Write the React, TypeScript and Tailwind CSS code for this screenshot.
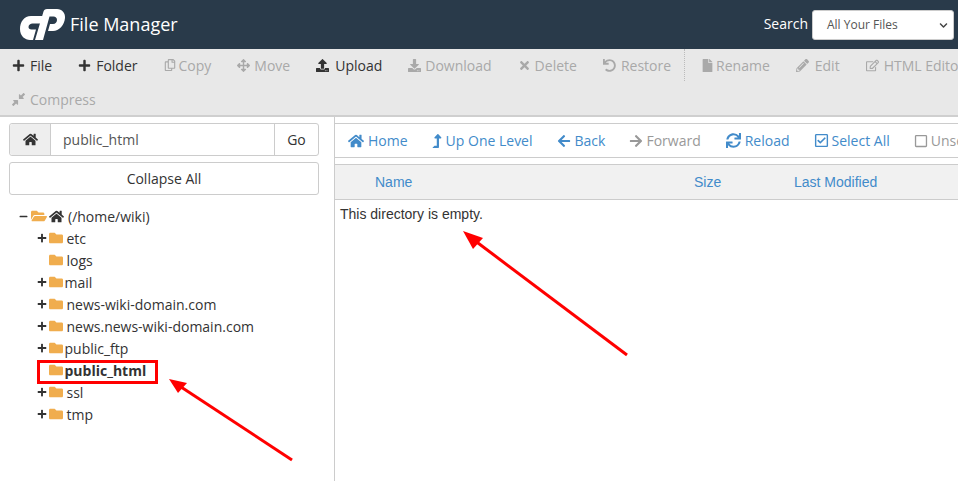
import React from "react";
import {
  FaArrowLeft,
  FaArrowRight,
  FaArrowsAlt,
  FaChevronDown,
  FaDownload,
  FaFile,
  FaFolder,
  FaFolderOpen,
  FaHome,
  FaLevelUpAlt,
  FaMinus,
  FaPencilAlt,
  FaPlus,
  FaRegCheckSquare,
  FaRegCopy,
  FaRegEdit,
  FaRegSquare,
  FaSync,
  FaTimes,
  FaUndo,
  FaUpload,
} from "react-icons/fa";
import { FaDownLeftAndUpRightToCenter } from "react-icons/fa6";

type IconType = React.ComponentType<{ size?: number; className?: string }>;

interface IButton {
  label: string;
  icon: IconType;
  slot: string;
  iconSize?: number;
  off?: boolean;
}

const toolbar: IButton[] = [
  { label: "File", icon: FaPlus, slot: "w-[13px]" },
  { label: "Folder", icon: FaPlus, slot: "w-[13px]" },
  { label: "Copy", icon: FaRegCopy, slot: "w-[10px]", iconSize: 12, off: true },
  { label: "Move", icon: FaArrowsAlt, slot: "w-[12px]", off: true },
  { label: "Upload", icon: FaUpload, slot: "w-[14px]" },
  { label: "Download", icon: FaDownload, slot: "w-[12px]", off: true },
  { label: "Delete", icon: FaTimes, slot: "w-[12px]", off: true },
  { label: "Restore", icon: FaUndo, slot: "w-[13px]", off: true },
];

const toolbarRight: IButton[] = [
  { label: "Rename", icon: FaFile, slot: "w-[10px]", off: true },
  { label: "Edit", icon: FaPencilAlt, slot: "w-[14px]", off: true },
  { label: "HTML Editor", icon: FaRegEdit, slot: "w-[13px]", off: true },
];

const navItems: IButton[] = [
  { label: "Home", icon: FaHome, slot: "w-[16px]", iconSize: 16 },
  { label: "Up One Level", icon: FaLevelUpAlt, slot: "w-[9px]", iconSize: 14 },
  { label: "Back", icon: FaArrowLeft, slot: "w-[13px]", iconSize: 14 },
  { label: "Forward", icon: FaArrowRight, slot: "w-[12px]", iconSize: 14, off: true },
  { label: "Reload", icon: FaSync, slot: "w-[15px]", iconSize: 15 },
  { label: "Select All", icon: FaRegCheckSquare, slot: "w-[13px]", iconSize: 15 },
  { label: "Unselect All", icon: FaRegSquare, slot: "w-[12px]", iconSize: 14, off: true },
];

const folders = [
  { name: "etc", plus: true, gap: true },
  { name: "logs", plus: false, gap: true },
  { name: "mail", plus: true, gap: false },
  { name: "news-wiki-domain.com", plus: true, gap: true },
  { name: "news.news-wiki-domain.com", plus: true, gap: true },
  { name: "public_ftp", plus: true, gap: false },
  { name: "public_html", plus: false, gap: false, active: true },
  { name: "ssl", plus: true, gap: true },
  { name: "tmp", plus: true, gap: true },
];

function ToolButton({ label, icon: Icon, slot, iconSize = 13, off }: IButton) {
  return (
    <span className={`flex shrink-0 items-center gap-[5px] whitespace-nowrap ${off ? "text-[#a9a9a9]" : "text-[#333333]"}`}>
      <span className={`flex justify-start ${slot}`}>
        <Icon size={iconSize} className="shrink-0" />
      </span>
      {label}
    </span>
  );
}

function Logo() {
  return (
    <svg width="46" height="32" viewBox="0 0 46 32" fill="#ffffff">
      <path d="M25 7L11 7C4 7 0 13 0 20C0 27 5 31 10 31L13 31L16 20.5L11.5 20.5C9.5 20.5 8.5 19.5 8.5 18C8.5 16 10.5 14.5 12.5 14.5L23 14.5Z" />
      <path d="M15 31L23.5 2.5C24 1 25 0 27 0L37 0C42 0 45.5 4 45 9C44.5 16 39 22 33 22L28 22L30 15L33 15C35.5 15 37 13 37 11C37 9 35.5 7.5 33.5 7.5L29.5 7.5L23 31Z" />
    </svg>
  );
}

function TreeRow({ name, plus, gap, active }: { name: string; plus: boolean; gap: boolean; active?: boolean }) {
  return (
    <div className="flex h-[22px] items-center pl-[36px]">
      <span className="flex w-[12px] justify-center text-[#333333]">{plus && <FaPlus size={10} />}</span>
      <FaFolder size={14} className="ml-[0.5px] text-[#f0ad4e]" />
      <span className={`${gap ? "ml-[4px]" : "ml-[2px]"} ${active ? "font-bold" : ""}`}>{name}</span>
    </div>
  );
}

export default function App() {
  return (
    <div className="relative h-[481px] w-[958px] overflow-hidden bg-white text-[14px] text-[#333333] [font-family:'Open_Sans',sans-serif]">
      <header className="flex h-[49px] items-center justify-between bg-[#293a4a] pl-[20px] pr-[4px]">
        <div className="flex items-center gap-[4px] text-[18px] text-white">
          <Logo />
          <span>File Manager</span>
        </div>
        <div className="flex items-center gap-[4px] text-white">
          <span className="pb-[2px]">Search</span>
          <div className="flex h-[30px] w-[142px] items-center justify-between rounded-[3px] border border-[#cccccc] bg-white pl-[14px] pr-[5px] pt-[1px] text-[12px] text-[#555555]">
            All Your Files
            <FaChevronDown size={9} className="text-[#444444]" />
          </div>
        </div>
      </header>

      <div className="h-[68px] overflow-hidden border-b-2 border-[#cfcfcf] bg-[#e8e8e8] pl-[12px]">
        <div className="flex h-[32px] items-center whitespace-nowrap">
          <div className="flex items-center gap-[26px]">
            {toolbar.map((item) => (
              <ToolButton key={item.label} {...item} />
            ))}
          </div>
          <span className="ml-[13px] h-[32px] border-l border-dotted border-[#bbbbbb]" />
          <div className="ml-[16px] flex items-center gap-[26px]">
            {toolbarRight.map((item) => (
              <ToolButton key={item.label} {...item} />
            ))}
          </div>
        </div>
        <div className="mt-[1px] flex h-[34px] items-center">
          <ToolButton label="Compress" icon={FaDownLeftAndUpRightToCenter} slot="w-[13px]" off />
        </div>
      </div>

      <div className="flex h-[364px]">
        <aside className="w-[335px] shrink-0 border-r border-[#cccccc] pl-[9px] pr-[15px] pt-[6px]">
          <div className="flex h-[33px] rounded-[3px] border border-[#cccccc]">
            <span className="flex w-[41px] items-center justify-center rounded-l-[3px] border-r border-[#cccccc] bg-[#eeeeee]">
              <FaHome size={15} />
            </span>
            <span className="flex flex-1 items-center pl-[12px] text-[#555555]">public_html</span>
            <span className="flex w-[44px] items-center justify-center border-l border-[#cccccc]">Go</span>
          </div>
          <div className="mt-[6px] flex h-[33px] items-center justify-center rounded-[3px] border border-[#cccccc]">
            Collapse All
          </div>
          <div className="-ml-[9px] mt-[10px]">
            <div className="flex h-[22px] items-center pl-[19px]">
              <FaMinus size={9} />
              <FaFolderOpen size={16} className="ml-[3px] text-[#f0ad4e]" />
              <FaHome size={15} className="ml-[2px]" />
              <span className="ml-[4px]">(/home/wiki)</span>
            </div>
            {folders.map((folder) => (
              <TreeRow key={folder.name} {...folder} />
            ))}
          </div>
        </aside>

        <main className="min-w-0 flex-1 pt-[6px]">
          <div className="flex h-[35px] items-center gap-[25px] overflow-hidden whitespace-nowrap border-y border-[#cccccc] pl-[13px] text-[#428bca]">
            {navItems.map(({ label, icon: Icon, slot, iconSize, off }) => (
              <span key={label} className={`flex shrink-0 items-center gap-[4px] ${off ? "text-[#999999]" : ""}`}>
                <span className={`flex justify-center ${slot}`}>
                  <Icon size={iconSize} className="shrink-0" />
                </span>
                {label}
              </span>
            ))}
          </div>
          <div className="mt-[6px] flex h-[36px] items-center border-y border-[#cccccc] bg-[#f1f1f1] text-[#428bca] [font-family:'Liberation_Sans',sans-serif]">
            <span className="ml-[40px] w-[319px]">Name</span>
            <span className="w-[100px]">Size</span>
            <span>Last Modified</span>
          </div>
          <p className="pl-[5px] pt-[4px] text-[#333333] [font-family:'Liberation_Sans',sans-serif]">
            This directory is empty.
          </p>
        </main>
      </div>

      {/* callouts drawn on top of the page */}
      <div className="absolute left-[37px] top-[360px] h-[24px] w-[121px] border-[3px] border-[#ff0000]" />
      <svg className="absolute left-0 top-0" width="958" height="481" fill="none">
        <path d="M292 460L178 385" stroke="#ff0000" strokeWidth="3" />
        <path d="M169 379L187 383L178 393Z" fill="#ff0000" />
        <path d="M627 355L474 240" stroke="#ff0000" strokeWidth="3" />
        <path d="M463 231L483 238L473 249Z" fill="#ff0000" />
      </svg>
    </div>
  );
}
